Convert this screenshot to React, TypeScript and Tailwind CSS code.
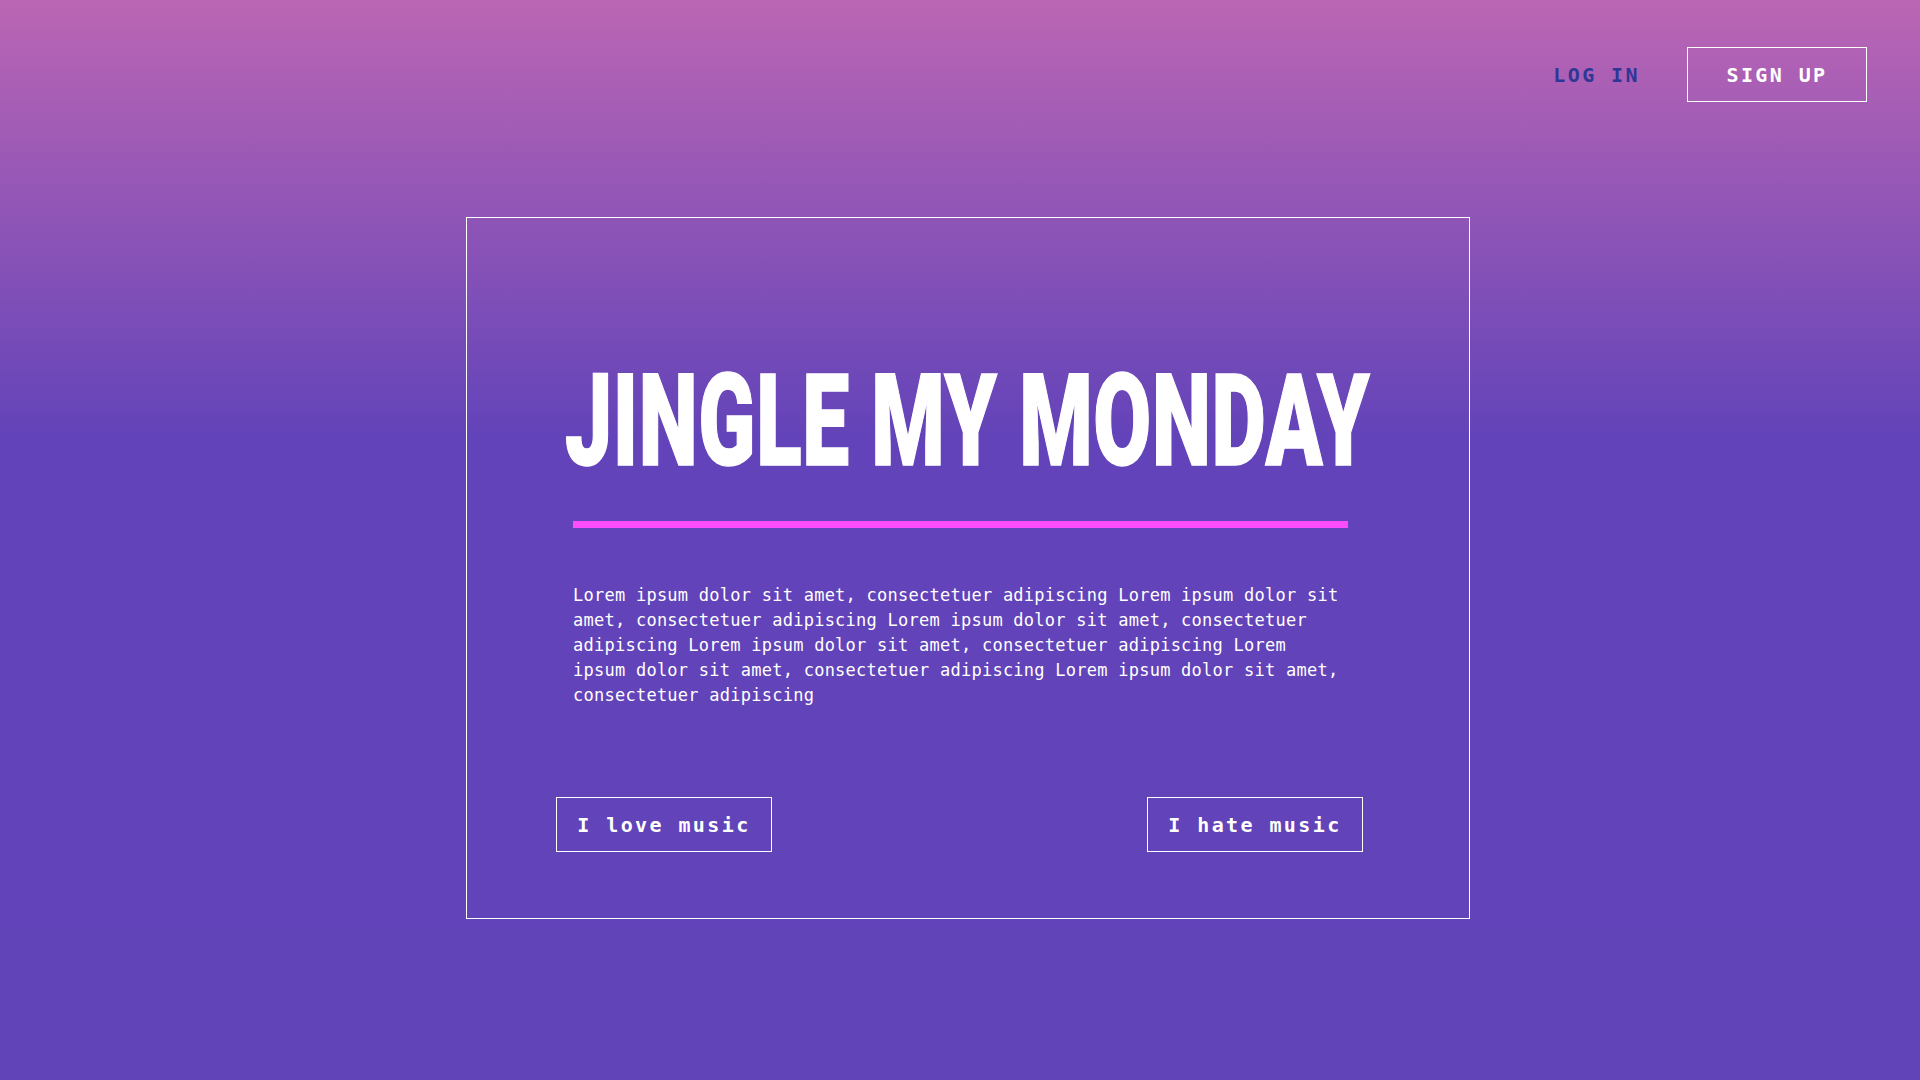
import React from "react";

const mono = "font-['DejaVu_Sans_Mono','Liberation_Mono',monospace]";

export default function App() {
  const para = Array(6)
    .fill("Lorem ipsum dolor sit amet, consectetuer adipiscing")
    .join(" ");
  return (
    <div className="min-h-screen w-full bg-[linear-gradient(180deg,#bb66b4_0px,#6243b9_440px,#6244b9_100%)] pb-[161px]">
      <header className={`flex items-center justify-end pt-[47px] pr-[53px] ${mono}`}>
        <a className="text-[20px] font-bold tracking-[2.4px] text-[#2e3796] leading-none cursor-pointer">
          LOG IN
        </a>
        <button className="ml-[47px] flex h-[55px] w-[180px] items-center justify-center border border-white text-[20px] font-bold tracking-[2.4px] text-white leading-none">
          SIGN UP
        </button>
      </header>

      <main className="ml-[466px] mt-[115px] h-[702px] w-[1004px] border border-white">
        <div className="flex justify-center pt-[139px]">
          <h1 className="inline-block origin-center scale-x-[0.655] whitespace-nowrap font-['Roboto','Inter',sans-serif] text-[128px] font-black leading-[128px] tracking-[1px] text-white [-webkit-text-stroke:1.5px_white]">
            JINGLE MY MONDAY
          </h1>
        </div>
        <div className="ml-[106px] mt-[36px] h-[7px] w-[775px] bg-[#fe4cfb]" />
        <p
          className={`ml-[106px] mt-[55px] w-[772px] text-[17px] leading-[25px] tracking-[0.25px] text-white ${mono}`}
        >
          {para}
        </p>
        <div className={`ml-[89px] mt-[89px] flex w-[807px] justify-between ${mono}`}>
          <button className="flex h-[55px] w-[216px] items-center justify-center border border-white text-[20px] font-bold tracking-[2.4px] text-white leading-none">
            I love music
          </button>
          <button className="flex h-[55px] w-[216px] items-center justify-center border border-white text-[20px] font-bold tracking-[2.4px] text-white leading-none">
            I hate music
          </button>
        </div>
      </main>
    </div>
  );
}
